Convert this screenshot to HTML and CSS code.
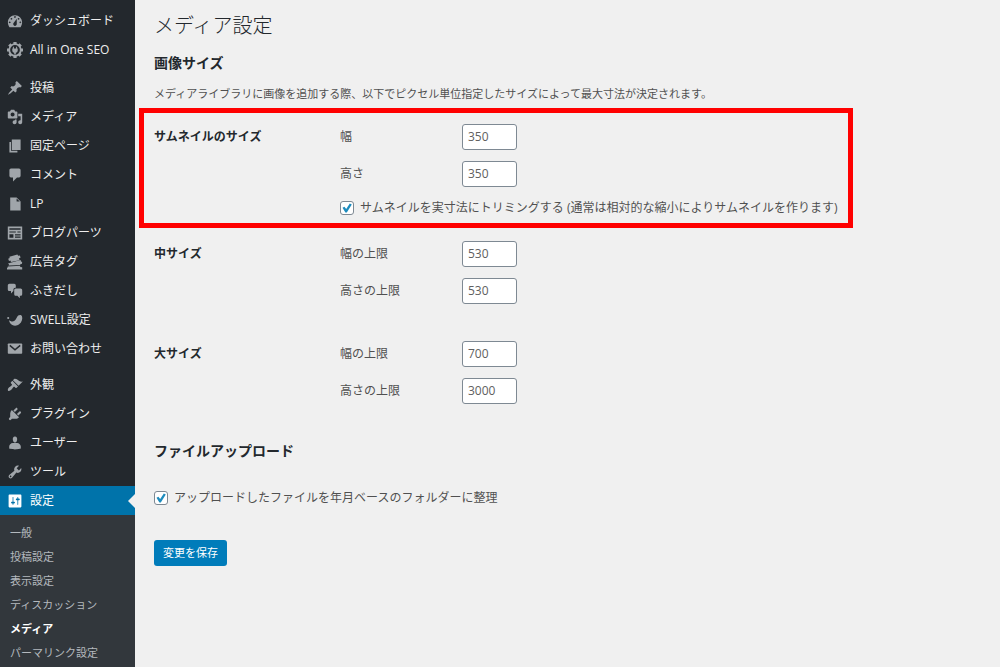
FILE: index.html
```html
<!DOCTYPE html>
<html lang="ja">
<head>
<meta charset="utf-8">
<meta name="viewport" content="width=device-width, initial-scale=1">
<title>メディア設定</title>
<link rel="stylesheet" href="styles.css">
</head>
<body>
<div class="layout">
  <nav class="sidebar" aria-label="メインメニュー">
    <ul class="menu">
      <li><a class="menu-link" href="#"><svg class="icon" viewBox="1 1 18 18"><path fill-rule="evenodd" d="M3.76 17h12.48c1.1-1.37 1.76-3.61 1.76-5.500 0-4.42-3.58-8-8-8s-8 3.58-8 8c0 1.89.66 4.130 1.76 5.500zM10 4.500c.55 0 1 .45 1 1s-.45 1-1 1-1-.45-1-1 .45-1 1-1zM6 6.500c.55 0 1 .45 1 1s-.45 1-1 1-1-.45-1-1 .45-1 1-1zm8 0c.55 0 1 .45 1 1s-.45 1-1 1-1-.45-1-1 .45-1 1-1zm-5.37 5.550L12 7.500v6c0 1.100-.9 2-2 2s-2-.9-2-2c0-.57.24-1.080.63-1.450zM4 10.500c.55 0 1 .45 1 1s-.45 1-1 1-1-.45-1-1 .45-1 1-1zm12 0c.55 0 1 .45 1 1s-.45 1-1 1-1-.45-1-1 .45-1 1-1z"/></svg>ダッシュボード</a></li>
      <li><a class="menu-link" href="#"><svg class="icon" viewBox="0 0 20 20"><circle cx="10" cy="10" r="7.2" fill="none" stroke="currentColor" stroke-width="2.2"/><g stroke="currentColor" stroke-width="4"><path d="M10 0v3M10 17v3M0 10h3M17 10h3M2.9 2.9l2.2 2.2M14.9 14.9l2.2 2.2M2.9 17.1l2.2-2.2M14.9 5.1l2.2-2.2"/></g><path d="M7.4 6h1.2v2.2h2.8V6h1.2v2.2h.8v2.3c0 1.5-1 2.5-2.4 2.8v2.2H9v-2.2c-1.400-.3-2.400-1.300-2.400-2.800V8.200h.8z"/></svg>All in One SEO</a></li>
    </ul>
    <ul class="menu menu-content">
      <li><a class="menu-link" href="#"><svg class="icon" viewBox="0 0 20 20"><path d="M10.440 3.020l1.820-1.820 6.360 6.350-1.830 1.820c-1.050-.68-2.480-.57-3.410.36l-.75.75c-.92.93-1.040 2.350-.35 3.410l-1.830 1.820-2.410-2.410-2.800 2.790c-.42.42-3.380 2.710-3.800 2.290s1.860-3.390 2.280-3.810l2.790-2.790L4.100 9.360l1.830-1.820c1.050.69 2.480.57 3.400-.36l.75-.75c.93-.92 1.050-2.350.36-3.410z"/></svg>投稿</a></li>
      <li><a class="menu-link" href="#"><svg class="icon" viewBox="0 0 20 20"><path fill-rule="evenodd" d="M13 11V4c0-.55-.45-1-1-1h-1.670L9 1H5L3.670 3H2c-.55 0-1 .45-1 1v7c0 .55.45 1 1 1h10c.55 0 1-.45 1-1zM7 4.500c1.380 0 2.500 1.120 2.500 2.500S8.380 9.500 7 9.500 4.500 8.380 4.500 7 5.620 4.500 7 4.500zM14 6h5v10.500c0 1.380-1.120 2.500-2.500 2.500S14 17.880 14 16.500s1.120-2.500 2.500-2.500c.17 0 .34.02.5.05V9h-3V6zm-4 8.050V13h2v3.500c0 1.380-1.120 2.500-2.500 2.500S7 17.880 7 16.500 8.120 14 9.500 14c.17 0 .34.02.5.05z"/></svg>メディア</a></li>
      <li><a class="menu-link" href="#"><svg class="icon" viewBox="0 0 20 20"><path d="M6 15V2h11v13H6zm-1 1h8v2H3V5h2v11z"/></svg>固定ページ</a></li>
      <li><a class="menu-link" href="#"><svg class="icon" viewBox="0 0 20 20"><path d="M5 2h10c1.100 0 2 .9 2 2v7c0 1.100-.9 2-2 2h-2.500l-5 5v-5H5c-1.100 0-2-.9-2-2V4c0-1.100.9-2 2-2z"/></svg>コメント</a></li>
      <li><a class="menu-link" href="#"><svg class="icon" viewBox="0 0 20 20"><path fill-rule="evenodd" d="M12 2l5 5v11H4V2h8zm0 5h4l-4-4v4z"/></svg>LP</a></li>
      <li><a class="menu-link" href="#"><svg class="icon" viewBox="0 0 20 20"><path fill-rule="evenodd" d="M1 2h18v16H1zM3 4v2h14V4zM3 8v1.500h8V8zM13 8v1.500h4V8zM3 11.500V16h5v-4.500zM10 11.500V13h7v-1.500zM10 14.500V16h7v-1.500z"/></svg>ブログパーツ</a></li>
      <li><a class="menu-link" href="#"><svg class="icon" viewBox="0 0 20 20"><path d="M3 3.500l10-3 1 1.800 2-.5 1 2.700-2 1.200.8 2L5 10l-.7-1.800-1.800.4-1-2.600 1.900-.9z"/><path d="M4.500 10.800L17 7.500l.5 2 1.500.5-.5 2.500-2 .4v1L2 14.500l.5-1.800-1.300-.8z"/><path d="M1 15.500l15.500-.8 0 1.500 2.500.3v2.800H0v-2.100l1-.2z"/></svg>広告タグ</a></li>
      <li><a class="menu-link" href="#"><svg class="icon" viewBox="0 0 20 20"><path d="M11 6h-.82C9.070 6 8 7.200 8 8.160V10l-3 3v-3H3c-1.100 0-2-.9-2-2V3c0-1.100.9-2 2-2h6c1.100 0 2 .9 2 2v3zm0 1h6c1.100 0 2 .9 2 2v5c0 1.100-.9 2-2 2h-1v3l-3-3h-2c-1.100 0-2-.9-2-2V9c0-1.100.9-2 2-2z"/></svg>ふきだし</a></li>
      <li><a class="menu-link" href="#"><svg class="icon" viewBox="0 0 20 20"><circle cx="1.500" cy="7.500" r="1.300"/><path d="M2.500 10c2 2 4.500 2.300 6.500 1.300 2.800-1.400 3-5 5-6.800 1.700-1.500 4-1 4.700.7 1.200 3-.2 7.300-3.200 9.900-3.600 3-9 2.500-11.500-1.100-.8-1.200-1.400-2.700-1.500-4z"/></svg>SWELL設定</a></li>
      <li><a class="menu-link" href="#"><svg class="icon" viewBox="0 0 20 20"><rect x="1" y="3" width="18" height="13" rx="1"/><path d="M3.500 5.500L10 11l6.500-5.500" fill="none" stroke="#23282d" stroke-width="1.800"/></svg>お問い合わせ</a></li>
    </ul>
    <ul class="menu menu-admin">
      <li><a class="menu-link" href="#"><svg class="icon" viewBox="0 0 20 20"><path d="M14.480 11.060L7.410 3.990l1.500-1.500c.5-.56 2.300-.47 3.510.32 1.210.8 1.430 1.280 2.910 2.100 1.180.64 2.450 1.260 4.450.85zm-.71.71L6.700 4.700 4.930 6.470c-.39.39-.39 1.020 0 1.410l1.060 1.060c.39.39.39 1.030 0 1.420-.6.6-1.430 1.110-2.210 1.690-.35.26-.7.53-1.010.84C1.430 14.230.4 16.080 1.400 17.070c.99 1 2.840-.03 4.180-1.360.31-.31.58-.66.85-1.020.57-.78 1.080-1.610 1.690-2.210.39-.39 1.020-.39 1.410 0l1.060 1.060c.39.39 1.020.39 1.410 0z"/></svg>外観</a></li>
      <li><a class="menu-link" href="#"><svg class="icon" viewBox="0 0 20 20"><path d="M13.110 4.360L9.870 7.600 8 5.730l3.240-3.240c.35-.34 1.050-.2 1.560.32.52.51.66 1.210.31 1.550zm-8 1.770l.91-1.120 9.010 9.010-1.190.84c-.71.71-2.630 1.160-3.820 1.160H6.140L4.900 17.260c-.59.59-1.540.59-2.120 0-.59-.58-.59-1.530 0-2.120l1.240-1.240v-3.880c0-1.130.4-3.190 1.090-3.890zm7.260 3.970l3.240-3.240c.34-.35 1.040-.21 1.550.31.52.51.66 1.210.31 1.550l-3.240 3.250z"/></svg>プラグイン</a></li>
      <li><a class="menu-link" href="#"><svg class="icon" viewBox="0 0 20 20"><path d="M10 9.250c-2.270 0-2.730-3.440-2.730-3.440C7 4.020 7.820 2 9.970 2c2.160 0 2.980 2.020 2.710 3.810 0 0-.41 3.440-2.680 3.440zM7.280 10h5.440c2.390 0 4.520 2.330 4.520 4.530v2.490s-3.650 1.130-7.240 1.130c-3.650 0-7.240-1.130-7.240-1.130v-2.490c0-2.250 1.940-4.530 4.520-4.530z"/></svg>ユーザー</a></li>
      <li><a class="menu-link" href="#"><svg class="icon" viewBox="0 0 20 20"><path fill-rule="evenodd" d="M16.680 9.770c-1.340 1.340-3.300 1.670-4.950.99l-5.410 6.520c-.99.99-2.590.99-3.580 0s-.99-2.590 0-3.570l6.520-5.420c-.68-1.650-.35-3.610.99-4.950 1.280-1.280 3.120-1.620 4.720-1.060l-2.890 2.890 2.820 2.820 2.860-2.870c.53 1.580.18 3.390-1.080 4.650zM3.810 16.210c.4.39 1.040.39 1.430 0 .4-.4.4-1.040 0-1.430-.39-.4-1.030-.4-1.430 0-.39.39-.39 1.030 0 1.430z"/></svg>ツール</a></li>
      <li><a class="menu-link current" href="#"><svg class="icon" viewBox="0 0 20 20"><path fill-rule="evenodd" d="M18 17V3c0-.55-.45-1-1-1H3c-.55 0-1 .45-1 1v14c0 .55.45 1 1 1h14c.55 0 1-.45 1-1zM8 11h1c.55 0 1 .45 1 1s-.45 1-1 1H8v1.500c0 .28-.22.5-.5.5s-.5-.22-.5-.5V13H6c-.55 0-1-.45-1-1s.45-1 1-1h1V5.500c0-.28.22-.5.5-.5s.5.22.5.5V11zm5-2h-1c-.55 0-1-.45-1-1s.45-1 1-1h1V5.500c0-.28.22-.5.5-.5s.5.22.5.5V7h1c.55 0 1 .45 1 1s-.45 1-1 1h-1v5.500c0 .28-.22.5-.5.5s-.5-.22-.5-.5V9z"/></svg>設定</a></li>
    </ul>
    <ul class="submenu">
      <li><a class="submenu-link" href="#">一般</a></li>
      <li><a class="submenu-link" href="#">投稿設定</a></li>
      <li><a class="submenu-link" href="#">表示設定</a></li>
      <li><a class="submenu-link" href="#">ディスカッション</a></li>
      <li><a class="submenu-link active" href="#" aria-current="page">メディア</a></li>
      <li><a class="submenu-link" href="#">パーマリンク設定</a></li>
    </ul>
  </nav>
  <main class="content">
    <h1 class="page-title">メディア設定</h1>
    <form class="settings">
      <h2 class="section-title">画像サイズ</h2>
      <p class="description">メディアライブラリに画像を追加する際、以下でピクセル単位指定したサイズによって最大寸法が決定されます。</p>
      <div class="size-group highlighted" role="group" aria-labelledby="thumb-title">
        <h3 class="group-title" id="thumb-title">サムネイルのサイズ</h3>
        <div class="fields">
          <div class="field"><label for="thumb-w">幅</label><input class="number" id="thumb-w" type="text" inputmode="numeric" value="350"></div>
          <div class="field"><label for="thumb-h">高さ</label><input class="number" id="thumb-h" type="text" inputmode="numeric" value="350"></div>
          <div class="check-row"><input class="check" id="crop" type="checkbox" checked><label for="crop">サムネイルを実寸法にトリミングする (通常は相対的な縮小によりサムネイルを作ります)</label></div>
        </div>
      </div>
      <div class="size-group" role="group" aria-labelledby="medium-title">
        <h3 class="group-title" id="medium-title">中サイズ</h3>
        <div class="fields">
          <div class="field"><label for="medium-w">幅の上限</label><input class="number" id="medium-w" type="text" inputmode="numeric" value="530"></div>
          <div class="field"><label for="medium-h">高さの上限</label><input class="number" id="medium-h" type="text" inputmode="numeric" value="530"></div>
        </div>
      </div>
      <div class="size-group" role="group" aria-labelledby="large-title">
        <h3 class="group-title" id="large-title">大サイズ</h3>
        <div class="fields">
          <div class="field"><label for="large-w">幅の上限</label><input class="number" id="large-w" type="text" inputmode="numeric" value="700"></div>
          <div class="field"><label for="large-h">高さの上限</label><input class="number" id="large-h" type="text" inputmode="numeric" value="3000"></div>
        </div>
      </div>
      <h2 class="section-title">ファイルアップロード</h2>
      <div class="check-row upload"><input class="check" id="folders" type="checkbox" checked><label for="folders">アップロードしたファイルを年月ベースのフォルダーに整理</label></div>
      <button class="save" type="submit">変更を保存</button>
    </form>
  </main>
</div>
</body>
</html>
```
FILE: styles.css
```css
* {
  box-sizing: border-box;
}

body {
  margin: 0;
  background: #f0f0f0;
  color: #505050;
  font-family: "Open Sans", "Noto Sans CJK JP", sans-serif;
  font-size: 12px;
  line-height: 20px;
}

h1, h2, h3, p, ul {
  margin: 0;
  padding: 0;
}

ul {
  list-style: none;
}

.layout {
  display: flex;
  min-height: 100vh;
}

/* Sidebar */
.sidebar {
  display: flex;
  flex-direction: column;
  flex: 0 0 135px;
  padding-top: 6px;
  background: #23282d;
}

.menu-content {
  margin-top: 9px;
}

.menu-admin {
  margin-top: 7px;
}

.menu-link {
  position: relative;
  display: flex;
  align-items: center;
  gap: 7px;
  height: 29px;
  padding-left: 7px;
  color: #eee;
  text-decoration: none;
  white-space: nowrap;
}

.icon {
  flex: none;
  width: 16px;
  height: 16px;
  color: #a0a5aa;
  fill: currentColor;
}

.current {
  background: #0073aa;
  color: #fff;
}

.current .icon {
  color: #fff;
}

.current::after {
  content: "";
  position: absolute;
  right: 0;
  border: 7px solid transparent;
  border-left-width: 0;
  border-right-color: #f0f0f0;
}

.submenu {
  flex: 1;
  padding-top: 6px;
  background: #32373c;
}

.submenu-link {
  display: block;
  padding-left: 10px;
  color: #b4b9be;
  font-size: 11px;
  line-height: 24px;
  text-decoration: none;
}

.submenu-link.active {
  color: #fff;
  font-weight: 700;
}

/* Settings form */
.content {
  flex: 1;
  min-width: 0;
  padding: 12px 19px;
}

.page-title {
  color: #23282d;
  font-size: 20px;
  font-weight: 300;
  line-height: 28px;
}

.section-title {
  margin-top: 13px;
  color: #23282d;
  font-size: 14px;
  font-weight: 700;
}

.description {
  margin: 11px 0 4px;
  font-size: 11px;
}

.size-group {
  display: grid;
  grid-template-columns: 186px 1fr;
  margin-bottom: 37px;
}

.highlighted {
  width: fit-content;
  margin: 0 0 13px -15px;
  padding: 11px 11px 5px 10px;
  border: 5px solid #f00;
}

.group-title {
  color: #23282d;
  font-size: 12px;
  line-height: 26px;
}

.fields {
  display: grid;
  gap: 11px;
}

.field {
  display: grid;
  grid-template-columns: 122px 55px;
  line-height: 26px;
}

.number {
  width: 100%;
  height: 26px;
  padding: 0 5px;
  border: 1px solid #7e8993;
  border-radius: 3px;
  background: #fff;
  color: #606060;
  font: inherit;
}

.check-row {
  display: flex;
  align-items: center;
  gap: 6px;
}

.check {
  appearance: none;
  flex: none;
  display: grid;
  place-items: center;
  width: 14px;
  height: 14px;
  margin: 0;
  border: 1px solid #7e8993;
  border-radius: 3px;
  background: #fff;
}

.check:checked::before {
  content: "";
  width: 10px;
  height: 10px;
  background: #1e8cbe;
  clip-path: polygon(5% 48%, 24% 38%, 42% 60%, 78% 5%, 98% 15%, 48% 95%, 34% 95%);
}

.upload {
  margin: 27px 0 32px;
}

.save {
  height: 26px;
  padding: 0 9px;
  border: 0;
  border-radius: 3px;
  background: #007cba;
  color: #fff;
  font: inherit;
  font-size: 11px;
}
```
